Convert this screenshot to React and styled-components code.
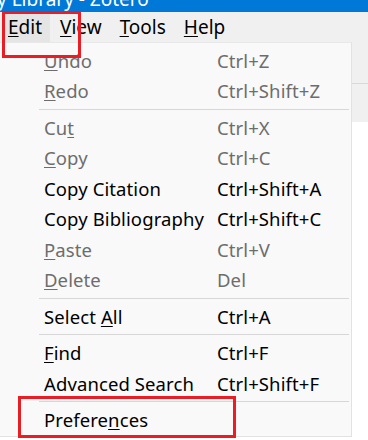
import React from "react";
import styled, { createGlobalStyle } from "styled-components";

const Global = createGlobalStyle`
  html, body { margin: 0; padding: 0; background: #ffffff; }
  body { font-family: "Segoe UI", "Noto Sans", "Noto Sans CJK SC", sans-serif; }
`;

const Page = styled.div`
  position: relative;
  width: 368px;
  height: 440px;
  overflow: hidden;
  background: #ffffff;
`;

const TitleBar = styled.div`
  height: 12px;
  background: #0078d7;
  overflow: hidden;
  color: #ffffff;
  font-size: 19px;
  line-height: 19px;
  white-space: nowrap;
`;

const TitleText = styled.div`
  margin-top: -10px;
  margin-left: -3px;
`;

const MenuBar = styled.div`
  height: 30px;
  background: #f0f0f0;
  display: flex;
  align-items: stretch;
  padding-left: 2px;
`;

const MenuBarItem = styled.div`
  display: flex;
  align-items: center;
  padding: 0 8px 0 6px;
  margin-right: 4px;
  font-size: 19px;
  color: #000;
  background: ${(p) => (p.$active ? "#e5e5e5" : "transparent")};
`;

const Main = styled.div`
  display: flex;
  height: 398px;
`;

const Panel = styled.div`
  width: 352px;
  height: 395px;
  box-sizing: border-box;
  background: #f9f9f9;
  border-right: 1px solid #e2e2e2;
  border-top: 1px solid #e8e8e8;
  border-bottom: 1px solid #e2e2e2;
  padding-top: 2px;
  display: flex;
  flex-direction: column;
`;

const Side = styled.div`
  flex: 1;
  display: flex;
  flex-direction: column;
`;

const SideTop = styled.div`
  height: 41px;
  background: #f0f0f0;
  border-bottom: 1px solid #d9d9d9;
`;

const SideMid = styled.div`
  height: 38px;
  background: #f0f0f0;
`;

const SideRest = styled.div`
  flex: 1;
  background: #ffffff;
`;

const Item = styled.div`
  height: 30.5px;
  display: grid;
  grid-template-columns: 173px 1fr;
  align-items: center;
  padding-left: 44px;
  font-size: 18.5px;
  letter-spacing: 0.1px;
  white-space: nowrap;
  color: ${(p) => (p.$disabled ? "#6d6d6d" : "#000000")};
`;

const Sep = styled.div`
  height: 1px;
  margin: 2.5px 2px 2.5px 39px;
  background: #d7d7d7;
`;

const Key = styled.u`
  text-decoration-thickness: 1px;
  text-underline-offset: 2px;
`;

const RedBox = styled.div`
  position: absolute;
  left: ${(p) => p.$x}px;
  top: ${(p) => p.$y}px;
  width: ${(p) => p.$w}px;
  height: ${(p) => p.$h}px;
  box-sizing: border-box;
  border: 3px solid #ea1c24;
  pointer-events: none;
`;

function Label({ text, k }) {
  if (k == null) return <span>{text}</span>;
  return (
    <span>
      {text.slice(0, k)}
      <Key>{text[k]}</Key>
      {text.slice(k + 1)}
    </span>
  );
}

const groups = [
  [
    { t: "Undo", k: 0, s: "Ctrl+Z", d: true },
    { t: "Redo", k: 0, s: "Ctrl+Shift+Z", d: true },
  ],
  [
    { t: "Cut", k: 2, s: "Ctrl+X", d: true },
    { t: "Copy", k: 0, s: "Ctrl+C", d: true },
    { t: "Copy Citation", s: "Ctrl+Shift+A" },
    { t: "Copy Bibliography", s: "Ctrl+Shift+C" },
    { t: "Paste", k: 0, s: "Ctrl+V", d: true },
    { t: "Delete", k: 0, s: "Del", d: true },
  ],
  [{ t: "Select All", k: 7, s: "Ctrl+A" }],
  [
    { t: "Find", k: 0, s: "Ctrl+F" },
    { t: "Advanced Search", s: "Ctrl+Shift+F" },
  ],
  [{ t: "Preferences", k: 7, s: "" }],
];

export default function App() {
  return (
    <Page>
      <Global />
      <TitleBar>
        <TitleText>y Library - Zotero</TitleText>
      </TitleBar>
      <MenuBar>
        <MenuBarItem $active><Label text="Edit" k={0} /></MenuBarItem>
        <MenuBarItem><Label text="View" k={0} /></MenuBarItem>
        <MenuBarItem><Label text="Tools" k={0} /></MenuBarItem>
        <MenuBarItem><Label text="Help" k={0} /></MenuBarItem>
      </MenuBar>
      <Main>
        <Panel>
          {groups.map((g, gi) => (
            <React.Fragment key={gi}>
              {gi > 0 && <Sep />}
              {g.map((it) => (
                <Item key={it.t} $disabled={it.d}>
                  <Label text={it.t} k={it.k} />
                  <span>{it.s}</span>
                </Item>
              ))}
            </React.Fragment>
          ))}
        </Panel>
        <Side>
          <SideTop />
          <SideMid />
          <SideRest />
        </Side>
      </Main>
      <RedBox $x={2} $y={11} $w={79} $h={47} />
      <RedBox $x={18} $y={396} $w={218} $h={42} />
    </Page>
  );
}
